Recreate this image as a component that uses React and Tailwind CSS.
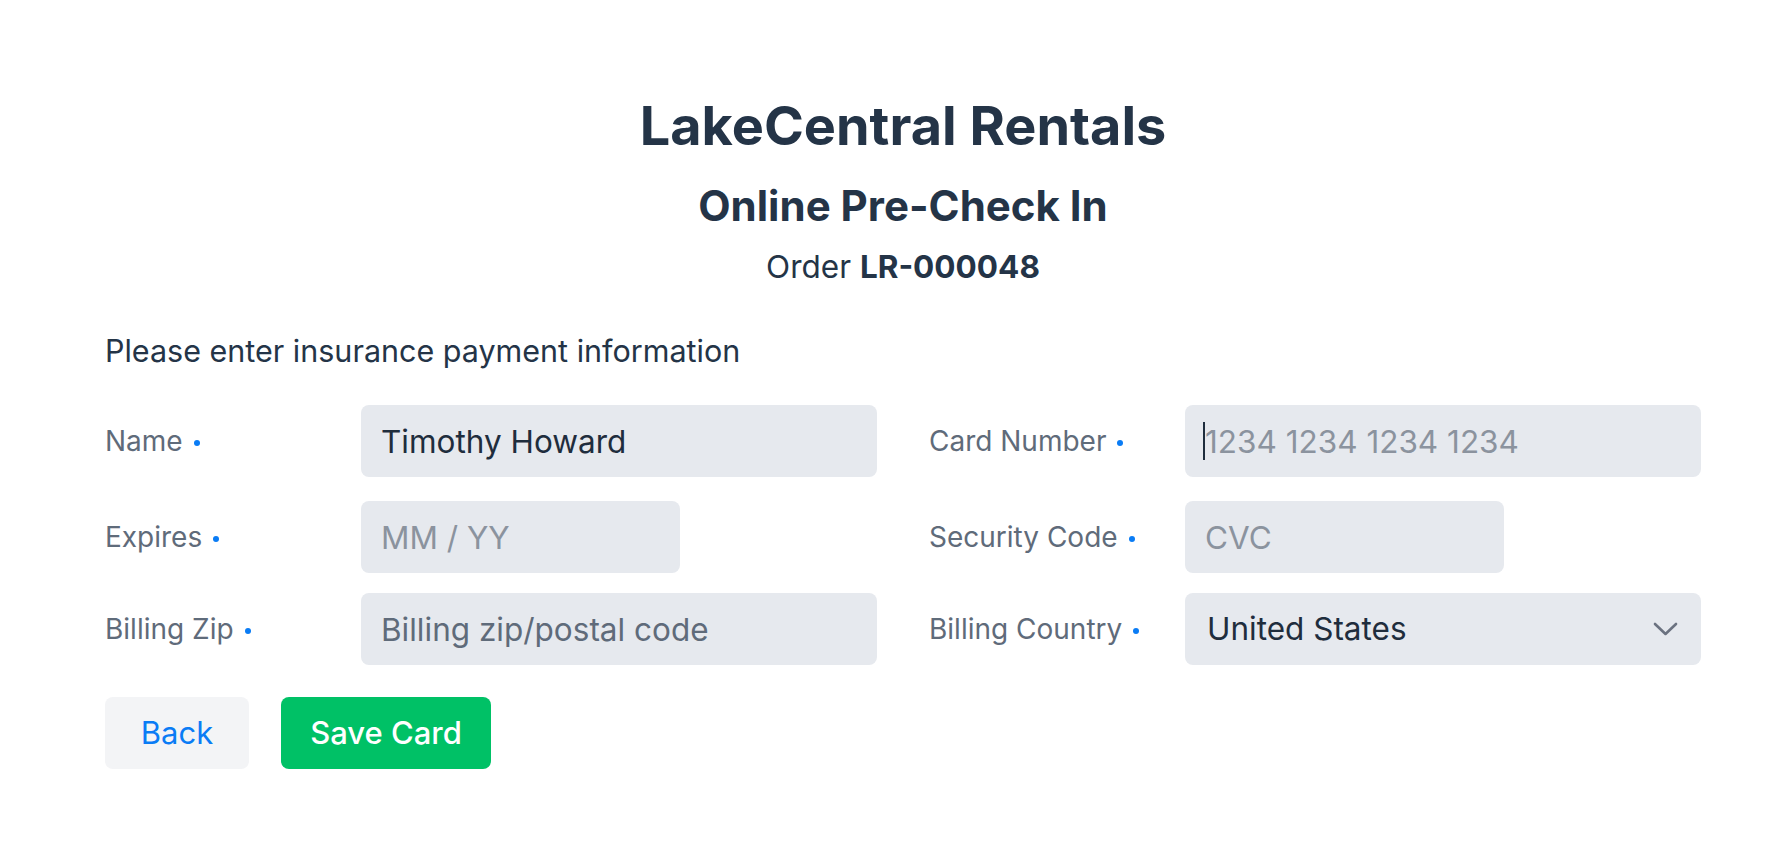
import React from "react";

const Dot = () => <span className="ml-[11px] inline-block h-[6px] w-[6px] rounded-full bg-[#0a7cf5] translate-y-[2px]" />;

const Field = ({ label, children }) => (
  <div className="flex items-center">
    <div className="w-[256px] shrink-0 text-[28px] text-[#5f6b7a] flex items-center">
      {label}
      <Dot />
    </div>
    {children}
  </div>
);

const inputCls =
  "h-[72px] rounded-[8px] bg-[#e6e9ee] px-[20px] text-[31.5px] text-[#1f2d3d] outline-none";

export default function App() {
  return (
    <div className="min-h-screen bg-white font-['Inter',sans-serif] text-[#243447]">
      <div className="ml-[105px] w-[1596px] pt-[94px]">
        <h1 className="text-center text-[54px] font-bold leading-[64px]">LakeCentral Rentals</h1>
        <h2 className="mt-[23px] text-center text-[42px] font-bold leading-[50px]">Online Pre-Check In</h2>
        <p className="mt-[16px] text-center text-[31.5px] leading-[40px]">
          Order <span className="font-bold">LR-000048</span>
        </p>

        <p className="mt-[44px] text-[30.5px] leading-[40px]">Please enter insurance payment information</p>

        <div className="mt-[34px] grid grid-cols-2 gap-x-[52px]">
          <div className="flex flex-col">
            <Field label="Name">
              <input className={`${inputCls} w-[516px]`} defaultValue="Timothy Howard" />
            </Field>
            <div className="mt-[24px]">
              <Field label="Expires">
                <input className={`${inputCls} w-[319px] placeholder:text-[#8b939e]`} placeholder="MM / YY" />
              </Field>
            </div>
            <div className="mt-[20px]">
              <Field label="Billing Zip">
                <input className={`${inputCls} w-[516px] placeholder:text-[#5f6b7a]`} placeholder="Billing zip/postal code" />
              </Field>
            </div>
          </div>

          <div className="flex flex-col">
            <Field label="Card Number">
              <div className="relative">
                <input className={`${inputCls} w-[516px] placeholder:text-[#8b939e]`} placeholder="1234 1234 1234 1234" />
                <span className="absolute left-[18px] top-[17px] h-[38px] w-[2px] bg-[#1f2d3d]" />
              </div>
            </Field>
            <div className="mt-[24px]">
              <Field label="Security Code">
                <input className={`${inputCls} w-[319px] placeholder:text-[#8b939e]`} placeholder="CVC" />
              </Field>
            </div>
            <div className="mt-[20px]">
              <Field label="Billing Country">
                <div className="flex h-[72px] w-[516px] items-center justify-between rounded-[8px] bg-[#e6e9ee] pl-[22px] pr-[23px] text-[31.5px] text-[#1f2d3d]">
                  <span>United States</span>
                  <svg width="25" height="14" viewBox="0 0 25 14" fill="none">
                    <path d="M2 2l10.5 10L23 2" stroke="#6b7280" strokeWidth="2.6" strokeLinecap="round" strokeLinejoin="round" />
                  </svg>
                </div>
              </Field>
            </div>
          </div>
        </div>

        <div className="mt-[32px] flex gap-[32px]">
          <button className="h-[72px] w-[144px] rounded-[8px] bg-[#f3f4f6] text-[31px] text-[#0a7cf5]">Back</button>
          <button className="h-[72px] w-[210px] rounded-[8px] bg-[#00c166] text-[31px] font-medium text-white">Save Card</button>
        </div>
      </div>
    </div>
  );
}
